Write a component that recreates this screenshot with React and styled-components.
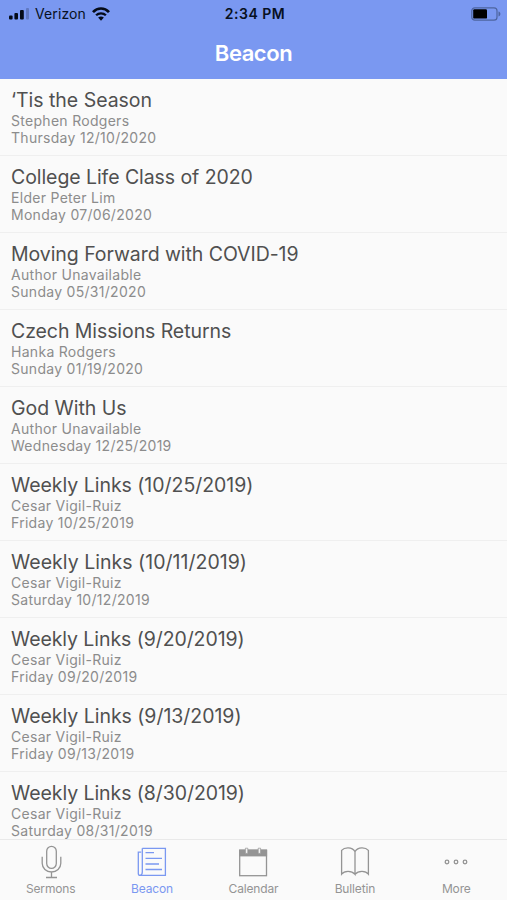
import React from "react";
import styled, { createGlobalStyle } from "styled-components";

const GlobalStyle = createGlobalStyle`
  * { box-sizing: border-box; }
  body { margin: 0; background: #fafafa; }
`;

const Screen = styled.div`
  display: flex;
  flex-direction: column;
  width: 507px;
  height: 900px;
  overflow: hidden;
  background: #fafafa;
  font-family: Inter, "Liberation Sans", sans-serif;
`;

const Header = styled.header`
  flex: none;
  height: 79px;
  background: #7a98f1;
`;

const StatusBar = styled.div`
  display: grid;
  grid-template-columns: 1fr auto 1fr;
  align-items: center;
  height: 27px;
  padding: 0 6px 0 9px;
  color: #071022;
  font-size: 14px;
  line-height: 18px;
`;

const Carrier = styled.div`
  display: flex;
  align-items: center;
  gap: 6px;
  letter-spacing: 0.1px;
`;

const Clock = styled.div`
  font-weight: 600;
  letter-spacing: 0.5px;
`;

const BatteryIcon = styled.svg`
  justify-self: end;
`;

const NavTitle = styled.h1`
  margin: 0;
  height: 52px;
  color: #fff;
  font-size: 22px;
  font-weight: 600;
  line-height: 52px;
  letter-spacing: -0.45px;
  text-align: center;
`;

const List = styled.main`
  flex: 1;
  min-height: 0;
  overflow: hidden;
`;

const Row = styled.article`
  height: 77px;
  padding: 9px 11px;
  border-bottom: 1px solid #efefef;
`;

const Title = styled.h2`
  margin: 0;
  color: #505050;
  font-size: 19.5px;
  font-weight: 400;
  line-height: 24px;
  letter-spacing: ${(p) => p.$tracking}px;
  white-space: nowrap;
`;

const Detail = styled.p`
  margin: 0;
  color: #8c8c8c;
  font-size: 14px;
  line-height: 17px;
  letter-spacing: 0.29px;
  white-space: nowrap;
`;

const TabBar = styled.nav`
  flex: none;
  display: grid;
  grid-template-columns: repeat(5, 1fr);
  height: 61px;
  border-top: 1px solid #e9e9e9;
  background: #fafafa;
`;

const Tab = styled.div`
  display: flex;
  flex-direction: column;
  align-items: center;
  padding-top: 4px;
  color: ${(p) => (p.$active ? "#7a98f1" : "#949494")};
  font-size: 12px;
  line-height: 16px;
  letter-spacing: -0.15px;
`;

const TabIcon = styled.svg`
  height: 37px;
  fill: none;
  stroke: currentColor;
  stroke-width: 1.3;
`;

const posts = [
  ["‘Tis the Season", "Stephen Rodgers", "Thursday 12/10/2020", -0.03],
  ["College Life Class of 2020", "Elder Peter Lim", "Monday 07/06/2020", -0.07],
  ["Moving Forward with COVID-19", "Author Unavailable", "Sunday 05/31/2020", -0.06],
  ["Czech Missions Returns", "Hanka Rodgers", "Sunday 01/19/2020", -0.08],
  ["God With Us", "Author Unavailable", "Wednesday 12/25/2019", -0.02],
  ["Weekly Links (10/25/2019)", "Cesar Vigil-Ruiz", "Friday 10/25/2019", -0.03],
  ["Weekly Links (10/11/2019)", "Cesar Vigil-Ruiz", "Saturday 10/12/2019", 0.03],
  ["Weekly Links (9/20/2019)", "Cesar Vigil-Ruiz", "Friday 09/20/2019", -0.08],
  ["Weekly Links (9/13/2019)", "Cesar Vigil-Ruiz", "Friday 09/13/2019", -0.03],
  ["Weekly Links (8/30/2019)", "Cesar Vigil-Ruiz", "Saturday 08/31/2019", -0.07],
];

const Signal = () => (
  <svg width="20" height="12" viewBox="0 0 20 12" fill="#050b18">
    <rect x="0" y="7.5" width="3.6" height="4" rx="1" />
    <rect x="5.4" y="5" width="3.6" height="6.5" rx="1" />
    <rect x="11" y="2" width="3.8" height="9.5" rx="1" />
    <rect x="17" y="0" width="3" height="11.5" rx="1" opacity="0.22" />
  </svg>
);

const Wifi = () => (
  <svg width="18" height="16" viewBox="0 0 18 16" fill="none" stroke="#050b18" strokeWidth="2.7">
    <path d="M1 6.1C5.5 1.3 12.5 1.3 17 6.1" />
    <path d="M4.1 9.3C6.8 6.6 11.2 6.6 13.9 9.3" strokeWidth="2.3" />
    <path d="M6.1 11.6Q9 9.3 11.9 11.6L9 14.8Z" fill="#050b18" stroke="none" />
  </svg>
);

const Battery = () => (
  <BatteryIcon width="30" height="14" viewBox="0 0 30 14">
    <rect x="0.8" y="0.8" width="25.2" height="12.4" rx="3" fill="none" stroke="#4d649f" strokeWidth="1.2" />
    <rect x="2.2" y="2.2" width="13.8" height="9.4" rx="1.2" fill="#000" />
    <path d="M27.5 4.6C30 5.2 30 8.8 27.5 9.4Z" fill="#4d649f" />
  </BatteryIcon>
);

const tabs = [
  {
    label: "Sermons",
    width: 22,
    art: (
      <>
        <rect x="6.7" y="2.4" width="9.6" height="22" rx="4.8" />
        <path d="M2.2 12.8v6.4a9.3 8.8 0 0 0 18.6 0V12.8M11.5 28V33.5M6 33.5h11" />
      </>
    ),
  },
  {
    label: "Beacon",
    width: 30,
    active: true,
    art: (
      <>
        <path d="M5.3 4.3H28.4V31.4H3.2Q1.3 31.4 1.3 29.5V8.2H4.2" />
        <path d="M5.3 4.3V28Q5.3 31 3.2 31.4M8.5 8.6h8.5M8.5 14.3H25M8.5 20h13.5M8.5 25.5H25" />
      </>
    ),
  },
  {
    label: "Calendar",
    width: 30,
    art: (
      <>
        <rect x="1.7" y="6.5" width="26.8" height="25.2" />
        <rect x="1.1" y="5.4" width="28" height="7" fill="currentColor" stroke="none" />
        <path d="M7.4 4.2h2.4V9.4H7.4zM20.2 4.2h2.4V9.4h-2.4z" fill="#f1f1f1" strokeWidth="0.7" />
      </>
    ),
  },
  {
    label: "Bulletin",
    width: 30,
    art: (
      <path d="M15 7.6C12 2.7 4.5 3.2 1.6 6.4V30.2C4.5 26.4 11.5 26.4 15 30.4V7.6C18 2.7 25.5 3.2 28.4 6.4V30.2C25.5 26.4 18.5 26.4 15 30.4" />
    ),
  },
  {
    label: "More",
    width: 26,
    art: (
      <>
        <circle cx="4" cy="18" r="1.8" />
        <circle cx="13" cy="18" r="1.8" />
        <circle cx="22" cy="18" r="1.8" />
      </>
    ),
  },
];

export default function App() {
  return (
    <Screen>
      <GlobalStyle />
      <Header>
        <StatusBar>
          <Carrier>
            <Signal />
            Verizon
            <Wifi />
          </Carrier>
          <Clock>2:34 PM</Clock>
          <Battery />
        </StatusBar>
        <NavTitle>Beacon</NavTitle>
      </Header>
      <List>
        {posts.map(([title, author, date, tracking]) => (
          <Row key={title}>
            <Title $tracking={tracking}>{title}</Title>
            <Detail>{author}</Detail>
            <Detail>{date}</Detail>
          </Row>
        ))}
      </List>
      <TabBar>
        {tabs.map((tab) => (
          <Tab key={tab.label} $active={tab.active}>
            <TabIcon width={tab.width} viewBox={`0 0 ${tab.width} 37`}>
              {tab.art}
            </TabIcon>
            {tab.label}
          </Tab>
        ))}
      </TabBar>
    </Screen>
  );
}
